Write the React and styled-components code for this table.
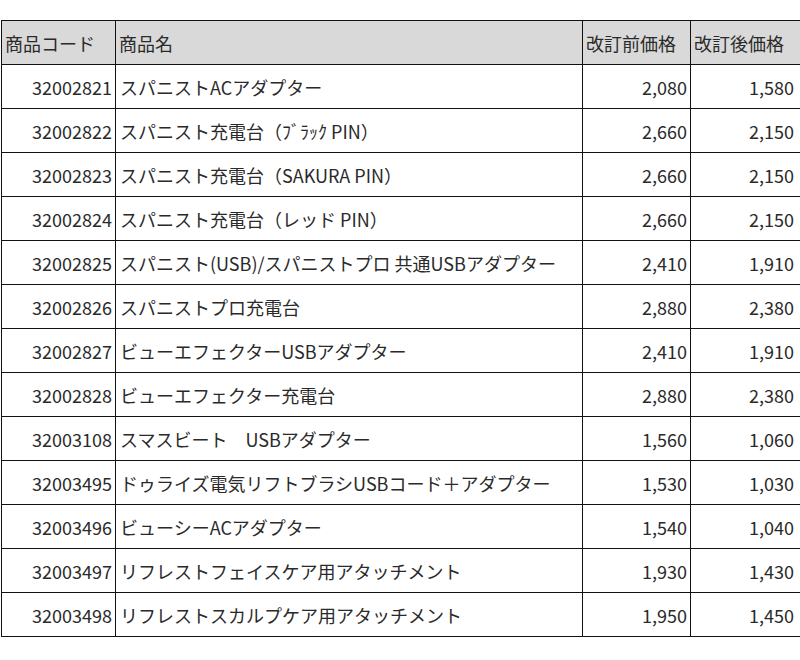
import React from "react";
import styled, { createGlobalStyle } from "styled-components";

const GlobalStyle = createGlobalStyle`
  body {
    margin: 0;
    padding: 20px 0 0 1px;
    background: #fff;
    font-family: "Noto Sans CJK JP", "Noto Sans", sans-serif;
    overflow: hidden;
  }
`;

const rows = [
  ["32002821", "スパニストACアダプター", "2,080", "1,580"],
  ["32002822", "スパニスト充電台（ﾌﾞﾗｯｸ PIN）", "2,660", "2,150"],
  ["32002823", "スパニスト充電台（SAKURA PIN）", "2,660", "2,150"],
  ["32002824", "スパニスト充電台（レッド PIN）", "2,660", "2,150"],
  ["32002825", "スパニスト(USB)/スパニストプロ 共通USBアダプター", "2,410", "1,910"],
  ["32002826", "スパニストプロ充電台", "2,880", "2,380"],
  ["32002827", "ビューエフェクターUSBアダプター", "2,410", "1,910"],
  ["32002828", "ビューエフェクター充電台", "2,880", "2,380"],
  ["32003108", "スマスビート　USBアダプター", "1,560", "1,060"],
  ["32003495", "ドゥライズ電気リフトブラシUSBコード＋アダプター", "1,530", "1,030"],
  ["32003496", "ビューシーACアダプター", "1,540", "1,040"],
  ["32003497", "リフレストフェイスケア用アタッチメント", "1,930", "1,430"],
  ["32003498", "リフレストスカルプケア用アタッチメント", "1,950", "1,450"],
];

const Table = styled.table`
  border-collapse: collapse;
  width: 804px;
  table-layout: fixed;
  font-size: 18px;
  color: #2a2a2a;
`;

const Head = styled.th`
  background: #d9d9d9;
  border: 1px solid #111;
  height: 43px;
  padding: 0 3px;
  text-align: left;
  font-weight: normal;
  white-space: nowrap;
  overflow: hidden;
`;

const Cell = styled.td`
  border: 1px solid #111;
  height: 43px;
  padding: 0 ${(p) => p.$pad || "5px"} 0 4px;
  text-align: ${(p) => (p.$num ? "right" : "left")};
  white-space: nowrap;
`;

export default function App() {
  return (
    <>
      <GlobalStyle />
      <Table>
        <colgroup>
          <col style={{ width: 114 }} />
          <col style={{ width: 467 }} />
          <col style={{ width: 108 }} />
          <col style={{ width: 115 }} />
        </colgroup>
        <thead>
          <tr>
            <Head>商品コード</Head>
            <Head>商品名</Head>
            <Head>改訂前価格</Head>
            <Head>改訂後価格</Head>
          </tr>
        </thead>
        <tbody>
          {rows.map((r) => (
            <tr key={r[0]}>
              <Cell $num $pad="3px">{r[0]}</Cell>
              <Cell>{r[1]}</Cell>
              <Cell $num $pad="3px">{r[2]}</Cell>
              <Cell $num $pad="11px">{r[3]}</Cell>
            </tr>
          ))}
        </tbody>
      </Table>
    </>
  );
}
